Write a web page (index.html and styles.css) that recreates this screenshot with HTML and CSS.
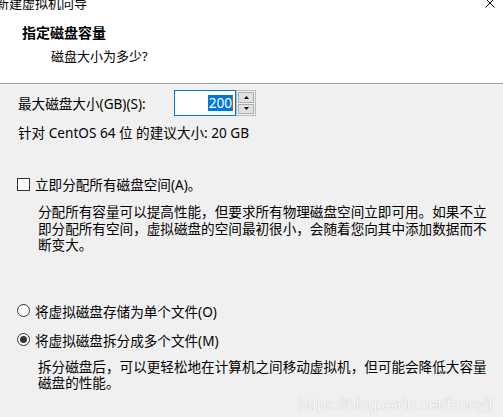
FILE: index.html
```html
<!DOCTYPE html>
<html lang="zh">
<head>
  <meta charset="UTF-8" />
  <title>新建虚拟机向导</title>
  <link rel="stylesheet" href="styles.css">
</head>
<body>

<div class="header">
  <div class="titlebar">
    <span class="title">新建虚拟机向导</span>
    <svg class="close" width="10" height="8" viewBox="0 0 10 8"><path d="M0.5 -1.5 L9.5 7.5 M9.5 -1.5 L0.5 7.5" stroke="#000" stroke-width="1"/></svg>
  </div>
  <h1>指定磁盘容量</h1>
  <p class="sub">磁盘大小为多少?</p>
</div>

<div class="content">
  <div class="size-row">
    <label class="size-label">最大磁盘大小(GB)(S):</label>
    <div class="num-box"><span class="sel">200</span><span class="caret"></span></div>
    <div class="spin">
      <div class="spin-btn"><svg width="5" height="3" viewBox="0 0 5 3"><path d="M2.5 0 L5 3 L0 3 Z" fill="#000"/></svg></div>
      <div class="spin-btn"><svg width="5" height="3" viewBox="0 0 5 3"><path d="M0 0 L5 0 L2.5 3 Z" fill="#000"/></svg></div>
    </div>
  </div>

  <div class="recommend">针对 CentOS 64 位 的建议大小: 20 GB</div>

  <div class="opt-row check-row">
    <span class="checkbox"></span>
    <span class="opt-label">立即分配所有磁盘空间(A)。</span>
  </div>
  <p class="note">分配所有容量可以提高性能，但要求所有物理磁盘空间立即可用。如果不立即分配所有空间，虚拟磁盘的空间最初很小，会随着您向其中添加数据而不断变大。</p>

  <div class="opt-row radio-first">
    <span class="radio"></span>
    <span class="opt-label">将虚拟磁盘存储为单个文件(O)</span>
  </div>
  <div class="opt-row radio-second">
    <span class="radio on"></span>
    <span class="opt-label">将虚拟磁盘拆分成多个文件(M)</span>
  </div>
  <p class="note note-split">拆分磁盘后，可以更轻松地在计算机之间移动虚拟机，但可能会降低大容量磁盘的性能。</p>
</div>

<div class="watermark">https://blog.csdn.net/fancyjt</div>

</body>
</html>
```

FILE: styles.css
```css
body {
  margin: 0;
  height: 417px;
  overflow: hidden;
  position: relative;
  background-color: #f0f0f0;
  color: #000;
  font-family: "Noto Sans", "Noto Sans CJK SC", sans-serif;
  font-size: 13.6px;
}

.header {
  height: 83px;
  background-color: #fff;
  border-bottom: 1px solid #a0a0a0;
}

.titlebar {
  height: 10px;
  display: flex;
  justify-content: space-between;
  align-items: flex-end;
  overflow: hidden;
}

.title {
  margin-left: -4px;
  font-size: 13px;
  line-height: 13px;
}

.close {
  align-self: flex-start;
  margin-right: 8px;
}

h1 {
  margin: 14px 0 0 22px;
  font-size: 14px;
  line-height: 18px;
  font-weight: bold;
}

.sub {
  margin: 5px 0 0 51px;
  font-size: 13px;
  line-height: 18px;
}

.content {
  padding: 6px 0 0 18px;
}

.size-row {
  display: flex;
  align-items: center;
  height: 26px;
}

.size-label {
  width: 156px;
}

.num-box {
  box-sizing: border-box;
  width: 62px;
  height: 26px;
  border: 1px solid #0078d7;
  background: #fff;
  display: flex;
  justify-content: flex-end;
  align-items: center;
  padding-right: 2px;
}

.sel {
  background: #0078d7;
  color: #fff;
  line-height: 16px;
  padding: 0 0 0 1px;
}

.caret {
  width: 1px;
  height: 16px;
  background: #c8501e;
}

.spin {
  box-sizing: border-box;
  width: 20px;
  height: 26px;
  display: flex;
  flex-direction: column;
  gap: 1px;
  padding: 1px;
  border: 1px solid #bcbcbc;
  background: #f0f0f0;
}

.spin-btn {
  flex: 1;
  display: flex;
  align-items: center;
  justify-content: center;
  border: 1px solid #adadad;
  background: #e1e1e1;
}

.recommend {
  margin-top: 8px;
  line-height: 18px;
}

.opt-row {
  display: flex;
  align-items: center;
  height: 18px;
}

.check-row {
  margin-top: 33px;
}

.radio-first {
  margin-top: 48px;
}

.radio-second {
  margin-top: 11px;
}

.checkbox, .radio {
  box-sizing: border-box;
  width: 13px;
  height: 13px;
  margin-left: -1px;
  border: 1px solid #333;
  background: #fff;
}

.radio {
  border-radius: 50%;
  display: flex;
  align-items: center;
  justify-content: center;
}

.radio.on::after {
  content: "";
  width: 7px;
  height: 7px;
  border-radius: 50%;
  background: #333;
}

.opt-label {
  margin-left: 5px;
}

.note {
  margin: 11px 0 0 20px;
  width: 452px;
  line-height: 16.5px;
}

.note-split {
  margin-top: 10px;
}

.watermark {
  position: absolute;
  right: 10px;
  bottom: 3px;
  font-family: "Liberation Sans", sans-serif;
  font-size: 16px;
  line-height: 18px;
  color: #fafafa;
  text-shadow: 0 0 1px #c4c4c4, 0 0 1px #c4c4c4;
}
```
